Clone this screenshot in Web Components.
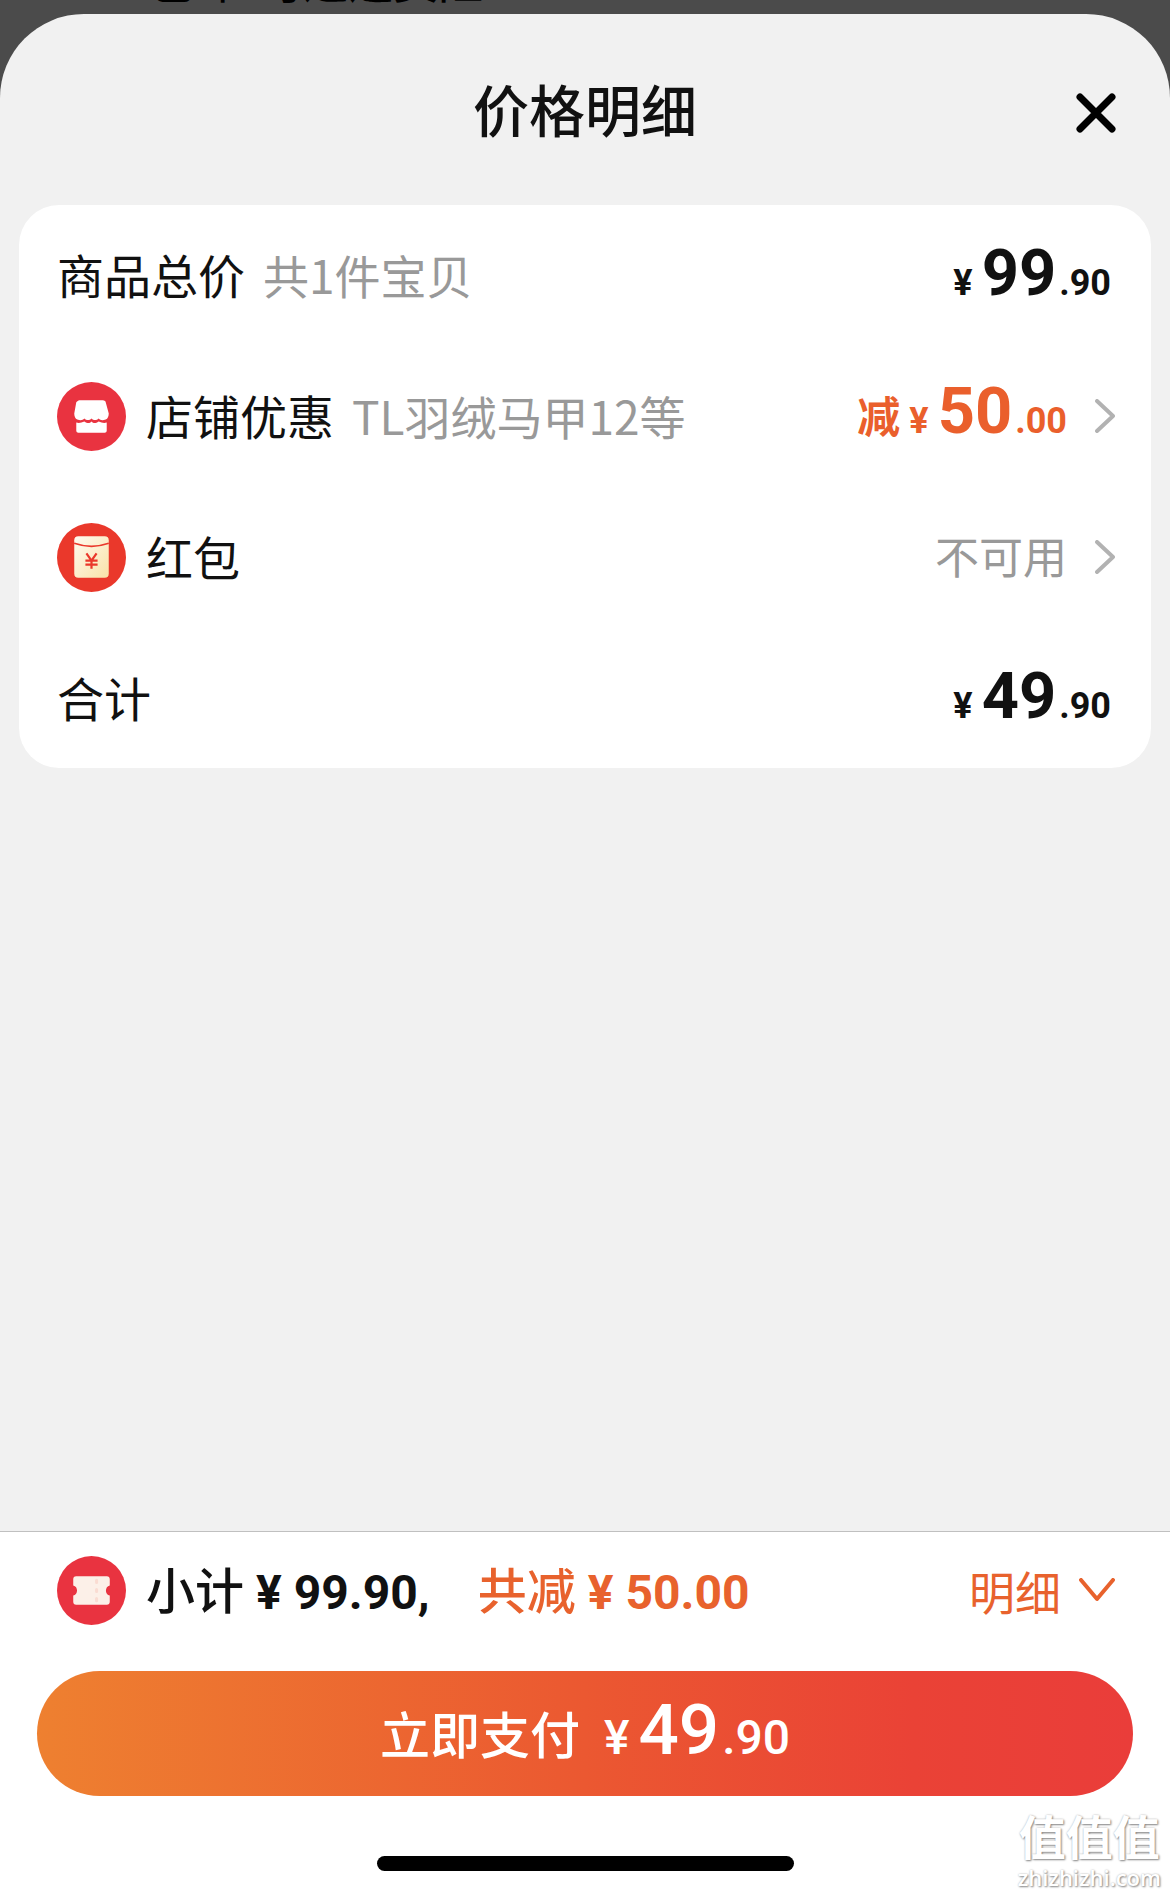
<!DOCTYPE html>
<html lang="zh-CN">
<head>
<meta charset="UTF-8">
<meta name="viewport" content="width=device-width, initial-scale=1">
<title>价格明细</title>
<style>
  html, body {
    margin: 0;
    height: 100%;
  }

  body {
    font-family: "Noto Sans CJK SC", sans-serif;
    color: #111;
    background: #4b4b4b;
  }
</style>
</head>
<body>
<price-page></price-page>

<script>
const ICONS = {
  shop: `
    <circle cx="34" cy="34" r="34" fill="#e93340"/>
    <path fill="#fff" d="M22 18h23c2 0 3 1 3 2l3 11c0 3-1 5-3 6-3 1-5 1-7-1-2 2-5 2-7 0-2 2-5 2-7 0-2 2-4 2-7 1-2-1-3-3-3-6l2-11c1-1 2-2 3-2z"/>
    <path fill="#fff" d="M19 40c3 1 5 0 8-1 3 2 5 2 7 0 2 2 4 2 7 0 3 1 5 2 8 1v8c0 1-1 2-2 2H21c-1 0-2-1-2-2z"/>`,
  packet: `
    <defs>
      <linearGradient id="paper" x1="0" y1="0" x2="1" y2="1">
        <stop offset="0" stop-color="#fffaf0"/>
        <stop offset="1" stop-color="#f9e2a8"/>
      </linearGradient>
    </defs>
    <circle cx="34" cy="34" r="34" fill="#ea382b"/>
    <rect x="17" y="13" width="34" height="41" rx="4" fill="url(#paper)"/>
    <path d="M17 20q17 6 34 0" fill="none" stroke="#ea382b" stroke-width="1.6"/>
    <path d="M29 30l5 7 5-7M34 37v8M28 37h12M28 41h12" fill="none" stroke="#ea382b" stroke-width="2.2"/>`,
  ticket: `
    <circle cx="34" cy="34" r="34" fill="#e93340"/>
    <path fill="#fcf0e8" d="M19 20h30c2 0 3 1 3 3v6c-5 1-5 9 0 10v6c0 2-1 3-3 3H19c-2 0-3-1-3-3v-6c5-1 5-9 0-10v-6c0-2 1-3 3-3z"/>
    <path d="M39 24v2M39 33v2M39 42v2" stroke="#fadcd2" stroke-width="3" stroke-linecap="round"/>`
};

class RoundIcon extends HTMLElement {
  constructor() {
    super();
    this.attachShadow({ mode: 'open' });
  }

  connectedCallback() {
    this.shadowRoot.innerHTML = `
      <style>
        :host { display: block; flex: none; width: 69px; height: 69px; }
        svg { display: block; width: 100%; height: 100%; }
      </style>
      <svg viewBox="0 0 68 68" aria-hidden="true">${ICONS[this.getAttribute('name')] || ''}</svg>
    `;
  }
}

// 价格：符号和小数部分用小号字
class PriceAmount extends HTMLElement {
  constructor() {
    super();
    this.attachShadow({ mode: 'open' });
  }

  connectedCallback() {
    const [whole, cents] = this.getAttribute('value').split('.');
    this.shadowRoot.innerHTML = `
      <style>
        :host {
          display: flex;
          align-items: baseline;
          font-family: Roboto, "Noto Sans CJK SC", sans-serif;
          font-weight: var(--price-weight, 700);
          font-size: var(--small-size, 36px);
          line-height: 1;
          white-space: nowrap;
        }
        .whole { font-size: var(--whole-size, 65px); margin: 0 3px 0 9px; }
      </style>
      <span>¥</span><span class="whole">${whole}</span><span>.${cents}</span>
    `;
  }
}

class PriceRow extends HTMLElement {
  constructor() {
    super();
    this.attachShadow({ mode: 'open' });
  }

  connectedCallback() {
    const icon = this.getAttribute('icon');
    const note = this.getAttribute('note');
    const link = this.hasAttribute('link');
    const tag = link ? 'button' : 'div';
    this.shadowRoot.innerHTML = `
      <style>
        :host { display: block; }
        .row {
          box-sizing: border-box;
          display: flex;
          align-items: center;
          width: 100%;
          height: 140px;
          padding: 0 40px 0 38px;
          border: 0;
          background: none;
          color: inherit;
          font: inherit;
          text-align: left;
        }
        button.row { padding-right: 36px; cursor: pointer; }
        round-icon { margin-right: 20px; }
        .label { font-size: 47px; line-height: 68px; padding-bottom: 2px; }
        .note { margin-left: 18px; font-size: 46px; line-height: 68px; padding-bottom: 2px; color: #999; }
        .value {
          display: flex;
          align-items: center;
          margin-left: auto;
          padding-bottom: 4px;
          font-size: 44px;
          line-height: 68px;
        }
        .arrow { flex: none; width: 20px; height: 34px; margin-left: 28px; }
      </style>
      <${tag} class="row">
        ${icon ? `<round-icon name="${icon}"></round-icon>` : ''}
        <span class="label">${this.getAttribute('label')}</span>
        ${note ? `<span class="note">${note}</span>` : ''}
        <span class="value"><slot></slot></span>
        ${link ? `
          <svg class="arrow" viewBox="0 0 20 34" aria-hidden="true">
            <path d="M2 2l16 15L2 32" fill="none" stroke="#b2b2b2" stroke-width="4" stroke-linecap="round" stroke-linejoin="round"/>
          </svg>` : ''}
      </${tag}>
    `;
  }
}

class SheetHeader extends HTMLElement {
  constructor() {
    super();
    this.attachShadow({ mode: 'open' });
    this.shadowRoot.innerHTML = `
      <style>
        :host {
          display: grid;
          grid-template-columns: 1fr auto 1fr;
          align-items: center;
          height: 191px;
          padding: 0 51px;
        }
        h1 { grid-column: 2; margin: 0 0 4px; font-size: 56px; font-weight: 500; line-height: 80px; }
        button {
          justify-self: end;
          width: 46px;
          height: 46px;
          margin-top: 6px;
          padding: 0;
          border: 0;
          background: none;
          cursor: pointer;
        }
        svg { display: block; }
      </style>
      <h1><slot></slot></h1>
      <button aria-label="关闭">
        <svg width="46" height="46" viewBox="0 0 46 46">
          <path d="M7 7l32 32M39 7L7 39" stroke="#000" stroke-width="7" stroke-linecap="round"/>
        </svg>
      </button>
    `;
  }
}

class PayBar extends HTMLElement {
  constructor() {
    super();
    this.attachShadow({ mode: 'open' });
    this.shadowRoot.innerHTML = `
      <style>
        :host {
          display: block;
          background: #fff;
          border-top: 1px solid #c0c0c0;
        }
        .summary {
          display: flex;
          align-items: center;
          height: 116px;
          padding: 0 55px 0 57px;
        }
        round-icon { margin-right: 20px; }
        .sum {
          display: flex;
          align-items: baseline;
          gap: 12px;
          font-size: 49px;
          font-weight: 500;
          line-height: 70px;
          white-space: nowrap;
        }
        .num { font-family: Roboto, sans-serif; font-weight: 700; font-size: 48px; }
        .off { margin-left: 48px; color: #e8622d; }
        .detail {
          display: flex;
          align-items: center;
          gap: 18px;
          margin-left: auto;
          padding: 0;
          border: 0;
          background: none;
          color: #e8622d;
          font: inherit;
          font-size: 46px;
          line-height: 70px;
          cursor: pointer;
        }
        .pay {
          display: flex;
          align-items: baseline;
          justify-content: center;
          gap: 24px;
          width: calc(100% - 74px);
          height: 125px;
          margin: 23px auto 0;
          padding: 0;
          border: 0;
          border-radius: 63px;
          background: linear-gradient(90deg, #ee8030, #eb5831 50%, #ea4236 80%, #ea3d3a);
          color: #fff;
          font: inherit;
          font-size: 50px;
          font-weight: 500;
          line-height: 122px;
          cursor: pointer;
          --whole-size: 71px;
          --small-size: 48px;
          --price-weight: 500;
        }
        .home {
          width: 417px;
          height: 15px;
          margin: 60px auto 24px;
          border-radius: 8px;
          background: #000;
        }
      </style>
      <div class="summary">
        <round-icon name="ticket"></round-icon>
        <span class="sum">小计<span class="num">¥</span><span class="num">99.90,</span></span>
        <span class="sum off">共减<span class="num">¥</span><span class="num">50.00</span></span>
        <button class="detail">明细
          <svg width="36" height="24" viewBox="0 0 36 24" aria-hidden="true">
            <path d="M2 2l16 19L34 2" fill="none" stroke="#e8622d" stroke-width="4" stroke-linecap="round" stroke-linejoin="round"/>
          </svg>
        </button>
      </div>
      <button class="pay"><span>立即支付</span><price-amount value="49.90"></price-amount></button>
      <div class="home"></div>
    `;
  }
}

class SiteMark extends HTMLElement {
  constructor() {
    super();
    this.attachShadow({ mode: 'open' });
    this.shadowRoot.innerHTML = `
      <style>
        :host {
          position: absolute;
          right: 9px;
          bottom: 2px;
          display: block;
          text-align: center;
          color: #fff;
          text-shadow: 1px 1px 2px #888, 0 0 2px #bbb;
          pointer-events: none;
        }
        .name { font-size: 47px; font-weight: 700; line-height: 52px; }
        .host { font-family: "Open Sans", sans-serif; font-size: 22px; font-weight: 600; line-height: 32px; }
      </style>
      <div class="name">值值值</div>
      <div class="host">zhizhizhi.com</div>
    `;
  }
}

class PricePage extends HTMLElement {
  constructor() {
    super();
    this.attachShadow({ mode: 'open' });
    this.shadowRoot.innerHTML = `
      <style>
        :host {
          position: relative;
          display: flex;
          flex-direction: column;
          min-height: 100%;
          overflow: hidden;
        }
        /* 弹层后面的页面，只露出最后一行的底部 */
        .behind {
          display: flex;
          align-items: flex-end;
          height: 14px;
          overflow: hidden;
          padding-left: 148px;
          color: #000;
          font-size: 45px;
          font-weight: 500;
        }
        .behind span { line-height: 46px; padding-bottom: 11px; white-space: pre; }
        .sheet {
          flex: 1;
          display: flex;
          flex-direction: column;
          border-radius: 84px 84px 0 0;
          background: #f1f1f1;
          overflow: hidden;
        }
        .card {
          display: grid;
          gap: 1px;
          margin: 0 19px;
          border-radius: 40px;
          background: #fff;
        }
        pay-bar { margin-top: auto; }
        .cut {
          display: flex;
          align-items: baseline;
          gap: 9px;
          padding-bottom: 2px;
          color: #ea5f2c;
          font-size: 43px;
          font-weight: 700;
        }
        .none { color: #999; }
      </style>
      <div class="behind"><span>包邮  可退运费险</span></div>
      <main class="sheet">
        <sheet-header>价格明细</sheet-header>
        <section class="card">
          <price-row label="商品总价" note="共1件宝贝"><price-amount value="99.90"></price-amount></price-row>
          <price-row icon="shop" label="店铺优惠" note="TL羽绒马甲12等" link>
            <span class="cut">减<price-amount value="50.00"></price-amount></span>
          </price-row>
          <price-row icon="packet" label="红包" link><span class="none">不可用</span></price-row>
          <price-row label="合计"><price-amount value="49.90"></price-amount></price-row>
        </section>
        <pay-bar></pay-bar>
      </main>
      <site-mark></site-mark>
    `;
  }
}

customElements.define('round-icon', RoundIcon);
customElements.define('price-amount', PriceAmount);
customElements.define('price-row', PriceRow);
customElements.define('sheet-header', SheetHeader);
customElements.define('pay-bar', PayBar);
customElements.define('site-mark', SiteMark);
customElements.define('price-page', PricePage);
</script>
</body>
</html>
